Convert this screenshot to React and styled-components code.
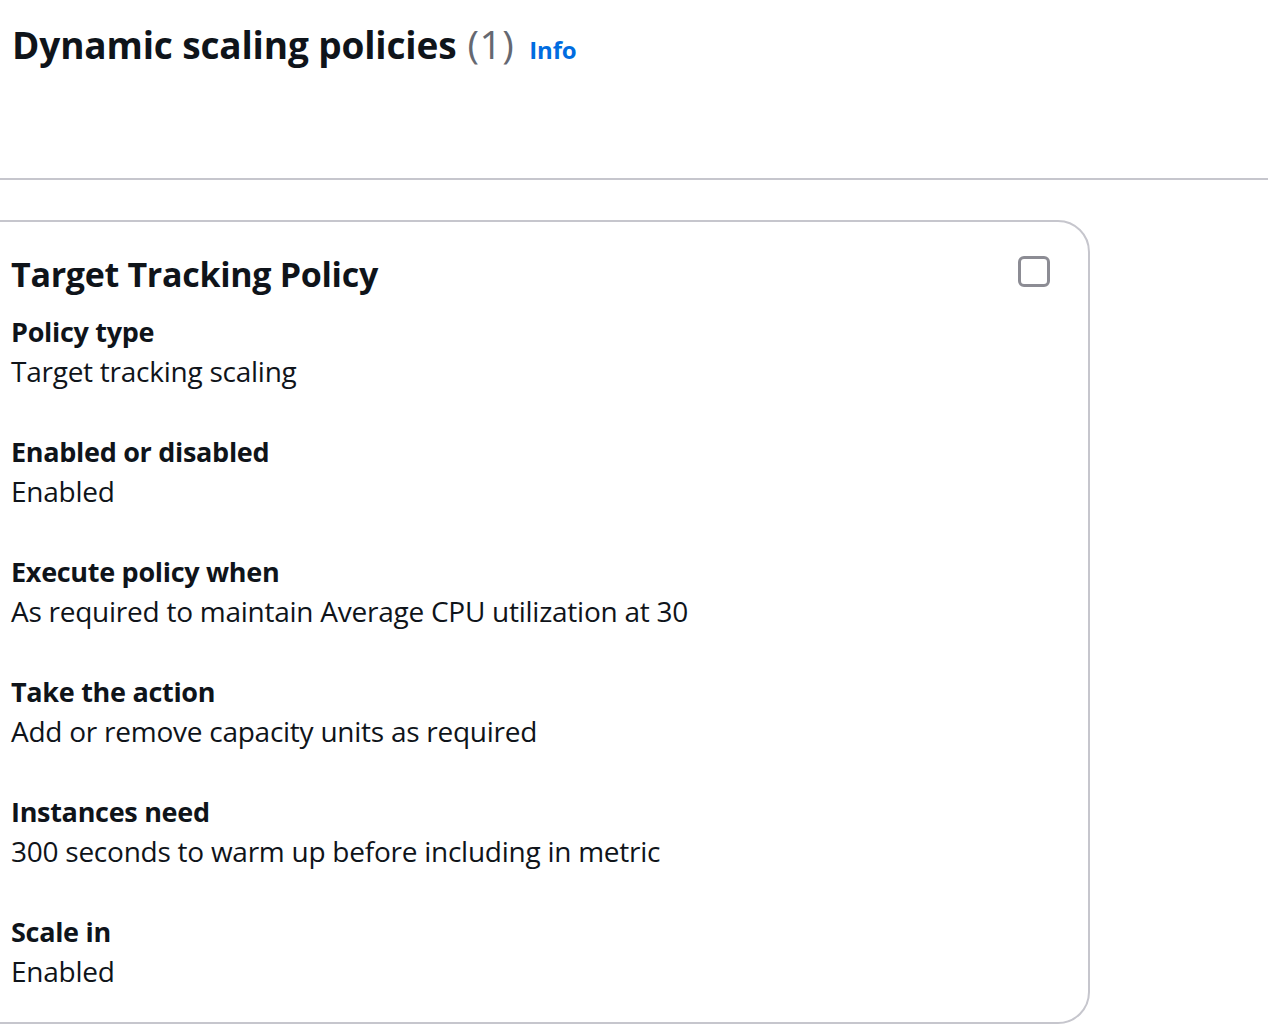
import React from "react";
import styled, { createGlobalStyle } from "styled-components";

const Global = createGlobalStyle`
  html, body { margin: 0; padding: 0; background: #ffffff; }
  body {
    font-family: "Open Sans", "Noto Sans", "Liberation Sans", sans-serif;
    color: #0f141a;
    overflow: hidden;
  }
`;

const Page = styled.div`
  width: 1268px;
  min-height: 1026px;
  display: flex;
  flex-direction: column;
`;

const Header = styled.header`
  height: 180px;
  padding: 20px 0 0 12px;
  box-sizing: border-box;
  border-bottom: 2px solid #c6c6cd;
  display: flex;
  align-items: flex-start;
`;

const Heading = styled.h2`
  margin: 0;
  font-size: 37px;
  line-height: 48px;
  font-weight: 700;
  letter-spacing: -0.15px;
  display: flex;
  align-items: baseline;
  gap: 15px;
`;

const Title = styled.span`
  display: flex;
  align-items: baseline;
  gap: 11px;
`;

const Count = styled.span`
  font-weight: 400;
  font-size: 39px;
  color: #656871;
  letter-spacing: 0.5px;
`;

const InfoLink = styled.a`
  font-size: 24px;
  font-weight: 700;
  color: #006ce0;
  text-decoration: none;
`;

const Card = styled.section`
  margin: 40px 0 0 -30px;
  width: 1120px;
  box-sizing: border-box;
  border: 2px solid #c6c6cd;
  border-radius: 32px;
  padding: 28px 38px 30px 39px;
  display: flex;
  flex-direction: column;
  gap: 40px;
`;

const CardHead = styled.div`
  display: flex;
  justify-content: space-between;
  align-items: flex-start;
  margin-bottom: -26px;
`;

const CardTitle = styled.h3`
  margin: 0;
  font-size: 34px;
  line-height: 48px;
  font-weight: 700;
  letter-spacing: -0.3px;
`;

const Checkbox = styled.span`
  width: 32px;
  height: 31px;
  box-sizing: border-box;
  border: 3px solid #8c8c94;
  border-radius: 6px;
  margin-top: 6px;
`;

const Field = styled.div`
  display: flex;
  flex-direction: column;
`;

const Label = styled.div`
  font-size: 27px;
  line-height: 40px;
  font-weight: 700;
  letter-spacing: -0.3px;
`;

const Value = styled.div`
  font-size: 28px;
  line-height: 38px;
  font-weight: 400;
  letter-spacing: -0.25px;
  padding-bottom: 2px;
`;

const fields = [
  ["Policy type", "Target tracking scaling"],
  ["Enabled or disabled", "Enabled"],
  ["Execute policy when", "As required to maintain Average CPU utilization at 30"],
  ["Take the action", "Add or remove capacity units as required"],
  ["Instances need", "300 seconds to warm up before including in metric"],
  ["Scale in", "Enabled"],
];

export default function App() {
  return (
    <Page>
      <Global />
      <Header>
        <Heading>
          <Title>
            <span>Dynamic scaling policies</span>
            <Count>(1)</Count>
          </Title>
          <InfoLink href="#">Info</InfoLink>
        </Heading>
      </Header>
      <Card>
        <CardHead>
          <CardTitle>Target Tracking Policy</CardTitle>
          <Checkbox />
        </CardHead>
        {fields.map(([l, v]) => (
          <Field key={l}>
            <Label>{l}</Label>
            <Value>{v}</Value>
          </Field>
        ))}
      </Card>
    </Page>
  );
}
